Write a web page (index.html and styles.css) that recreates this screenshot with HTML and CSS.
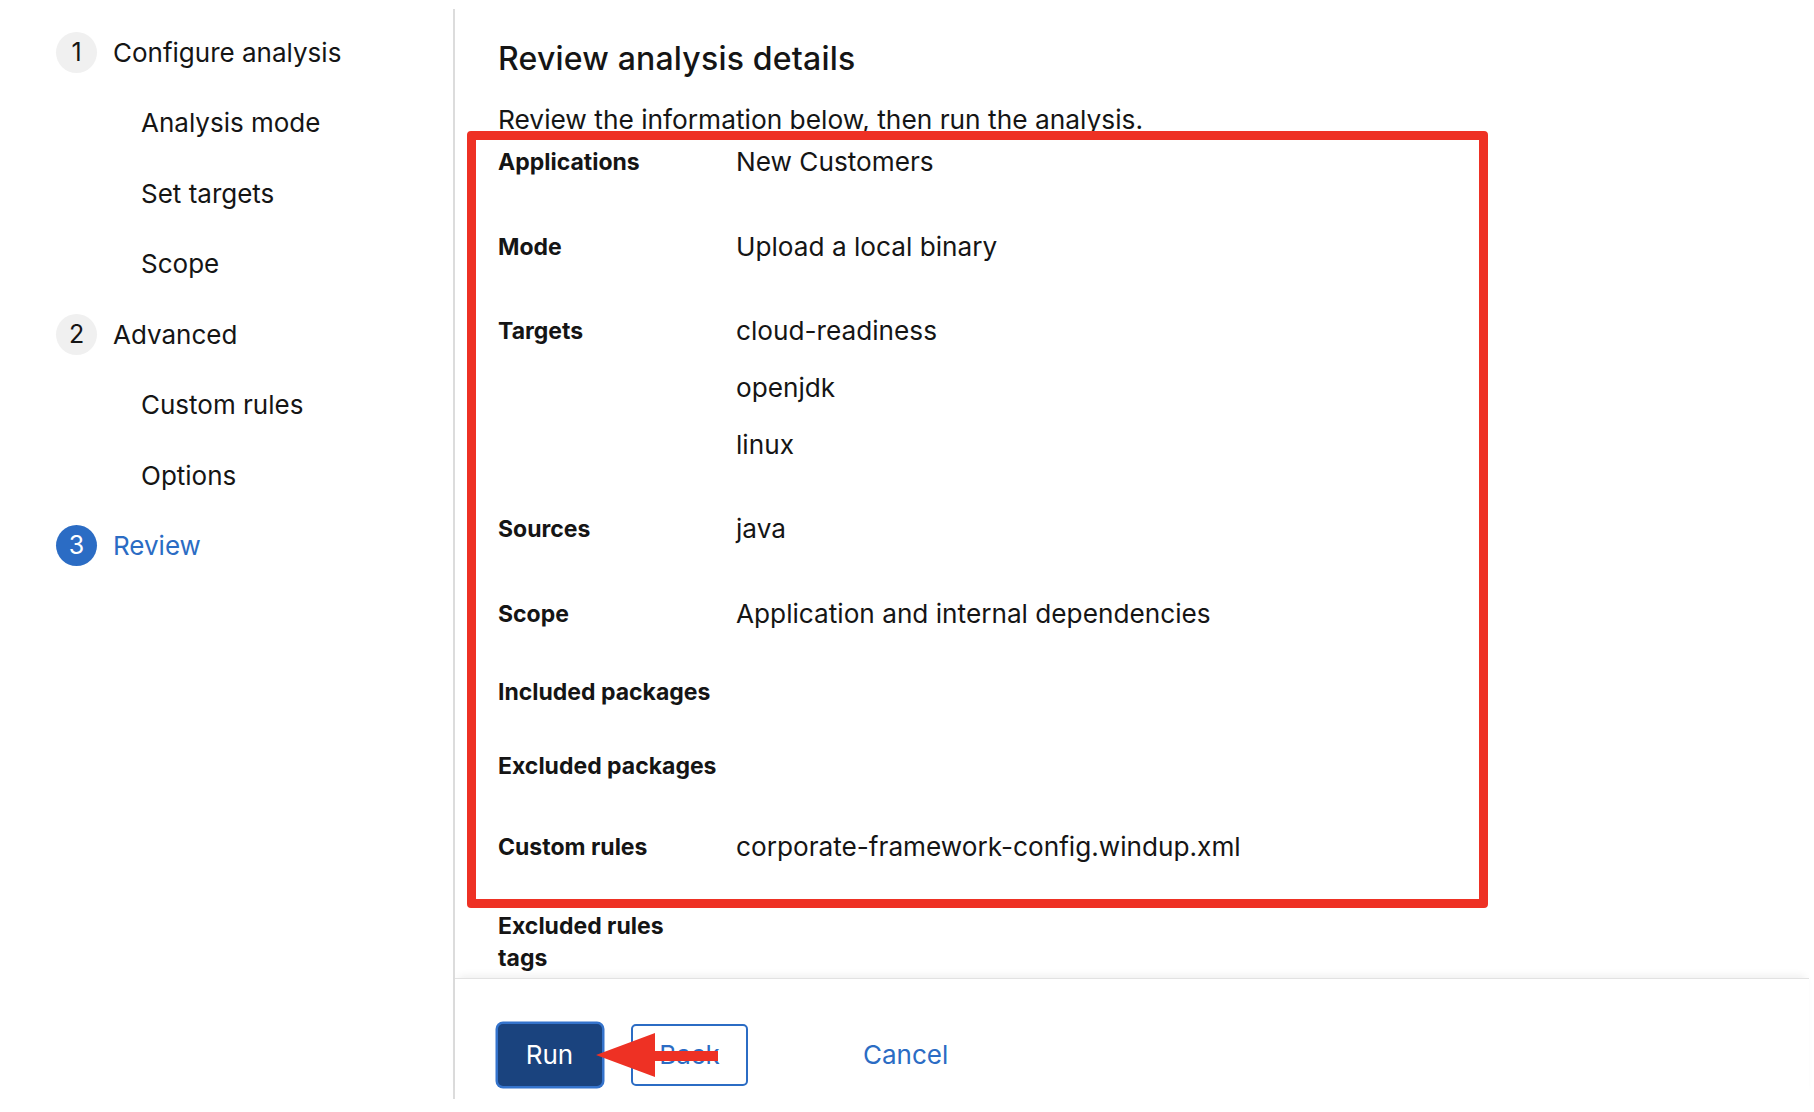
FILE: index.html
```html
<!DOCTYPE html>
<html lang="en">
<head>
<meta charset="utf-8">
<title>Review analysis details</title>
<link rel="stylesheet" href="styles.css">
</head>
<body>
<div class="wizard">
  <nav class="wizard-nav">
    <ol class="steps">
      <li class="step"><span class="step-num">1</span><span class="step-label">Configure analysis</span></li>
      <li class="step sub"><span class="step-label">Analysis mode</span></li>
      <li class="step sub"><span class="step-label">Set targets</span></li>
      <li class="step sub"><span class="step-label">Scope</span></li>
      <li class="step"><span class="step-num">2</span><span class="step-label">Advanced</span></li>
      <li class="step sub"><span class="step-label">Custom rules</span></li>
      <li class="step sub"><span class="step-label">Options</span></li>
      <li class="step current"><span class="step-num">3</span><span class="step-label">Review</span></li>
    </ol>
  </nav>
  <main class="wizard-main">
    <section class="wizard-body">
      <h1 class="title">Review analysis details</h1>
      <p class="desc">Review the information below, then run the analysis.</p>
      <dl class="details">
        <dt>Applications</dt>
        <dd><ul class="values"><li>New Customers</li></ul></dd>
        <dt>Mode</dt>
        <dd><ul class="values"><li>Upload a local binary</li></ul></dd>
        <dt>Targets</dt>
        <dd><ul class="values"><li>cloud-readiness</li><li>openjdk</li><li>linux</li></ul></dd>
        <dt>Sources</dt>
        <dd><ul class="values"><li>java</li></ul></dd>
        <dt>Scope</dt>
        <dd>Application and internal dependencies</dd>
        <dt>Included packages</dt>
        <dd class="empty"></dd>
        <dt>Excluded packages</dt>
        <dd class="empty-list"></dd>
        <dt>Custom rules</dt>
        <dd>corporate-framework-config.windup.xml</dd>
        <dt>Excluded rules<br>tags</dt>
        <dd></dd>
        <dt>Enable transaction analysis</dt>
        <dd>No</dd>
      </dl>
    </section>
    <footer class="wizard-footer">
      <button class="btn btn-primary" type="button">Run</button>
      <button class="btn btn-secondary" type="button">Back</button>
      <button class="btn btn-link" type="button">Cancel</button>
    </footer>
  </main>
</div>
<div class="annotation-box"></div>
<svg class="annotation-arrow" width="130" height="50" viewBox="590 1030 130 50" aria-hidden="true">
  <polygon points="596,1055 655,1033 655,1051 718,1051 718,1061 655,1061 655,1077" fill="#ee3124"/>
</svg>
</body>
</html>
```
FILE: styles.css
```css
* { box-sizing: border-box; }

body {
  margin: 0;
  background: #fff;
  color: #151515;
  font-family: "Inter", "Noto Sans", sans-serif;
}

.wizard {
  display: flex;
  width: 1809px;
  height: 1090px;
  margin-top: 9px;
}

/* ---------- nav ---------- */
.wizard-nav {
  width: 455px;
  flex: none;
  border-right: 2px solid #dcdcdc;
  padding: 8px 0 0 56px;
}

.steps {
  list-style: none;
  margin: 0;
  padding: 0;
}

.step {
  display: flex;
  align-items: center;
  gap: 16px;
  height: 70.5px;
  font-size: 26px;
  line-height: 39px;
  color: #151515;
}

.step.sub { padding-left: 85px; }

.step-num {
  width: 41px;
  height: 41px;
  flex: none;
  border-radius: 50%;
  background: #f0f0f0;
  display: flex;
  align-items: center;
  justify-content: center;
  font-size: 25px;
  color: #151515;
}

.step.current .step-label { color: #2b6cc4; }
.step.current .step-num { background: #2b6cc4; color: #fff; }

/* ---------- main ---------- */
.wizard-main {
  flex: 1;
  display: flex;
  flex-direction: column;
  min-width: 0;
}

.wizard-body {
  height: 969px;
  flex: none;
  overflow: hidden;
  padding: 29.9px 0 0 43px;
}

.title {
  margin: 0 0 22.1px;
  font-size: 32px;
  font-weight: 500;
  letter-spacing: 0.2px;
  line-height: 39px;
  color: #151515;
}

.desc {
  margin: 0;
  font-size: 26.3px;
  line-height: 39px;
}

.details {
  display: grid;
  grid-template-columns: 238px 1fr;
  row-gap: 41px;
  margin: 6.5px 0 0;
}

.details dt {
  padding-top: 1px;
  font-size: 23px;
  font-weight: 700;
  line-height: 32px;
  color: #151515;
}

.details dd {
  margin: 0;
  min-height: 37.5px;
  font-size: 26.2px;
  line-height: 33px;
}

.details dd.empty { min-height: 33px; }
.details dd.empty-list { min-height: 40px; }

.values {
  list-style: none;
  margin: 0;
  padding: 0 0 10.5px;
  display: flex;
  flex-direction: column;
  gap: 23.6px;
}

/* ---------- footer ---------- */
.wizard-footer {
  flex: 1;
  display: flex;
  align-items: flex-start;
  padding: 44.5px 0 0 42.5px;
  border-top: 1px solid #e2e2e2;
  box-shadow: 0 -6px 8px -4px rgba(0, 0, 0, 0.07);
}

.btn {
  height: 62px;
  border-radius: 5px;
  font-family: "Inter", "Noto Sans", sans-serif;
  font-size: 26px;
  line-height: 33px;
  padding: 0 27px;
  cursor: pointer;
}

.btn-primary {
  width: 104px;
  padding: 0;
  background: #1a437e;
  color: #fff;
  border: none;
  box-shadow: 0 0 0 2.5px #3473cc;
  margin-right: 29.5px;
}

.btn-secondary {
  width: 117px;
  padding: 0;
  background: #fff;
  color: #2b6cc4;
  border: 2px solid #2b6cc4;
}

.btn-link {
  background: transparent;
  border: none;
  color: #2b6cc4;
  margin-left: 88px;
}

/* ---------- annotation overlay ---------- */
.annotation-box {
  position: absolute;
  left: 467px;
  top: 131px;
  width: 1021px;
  height: 777px;
  border: 9px solid #ee3124;
  border-radius: 4px;
  pointer-events: none;
}

.annotation-arrow {
  position: absolute;
  left: 590px;
  top: 1030px;
}
```
